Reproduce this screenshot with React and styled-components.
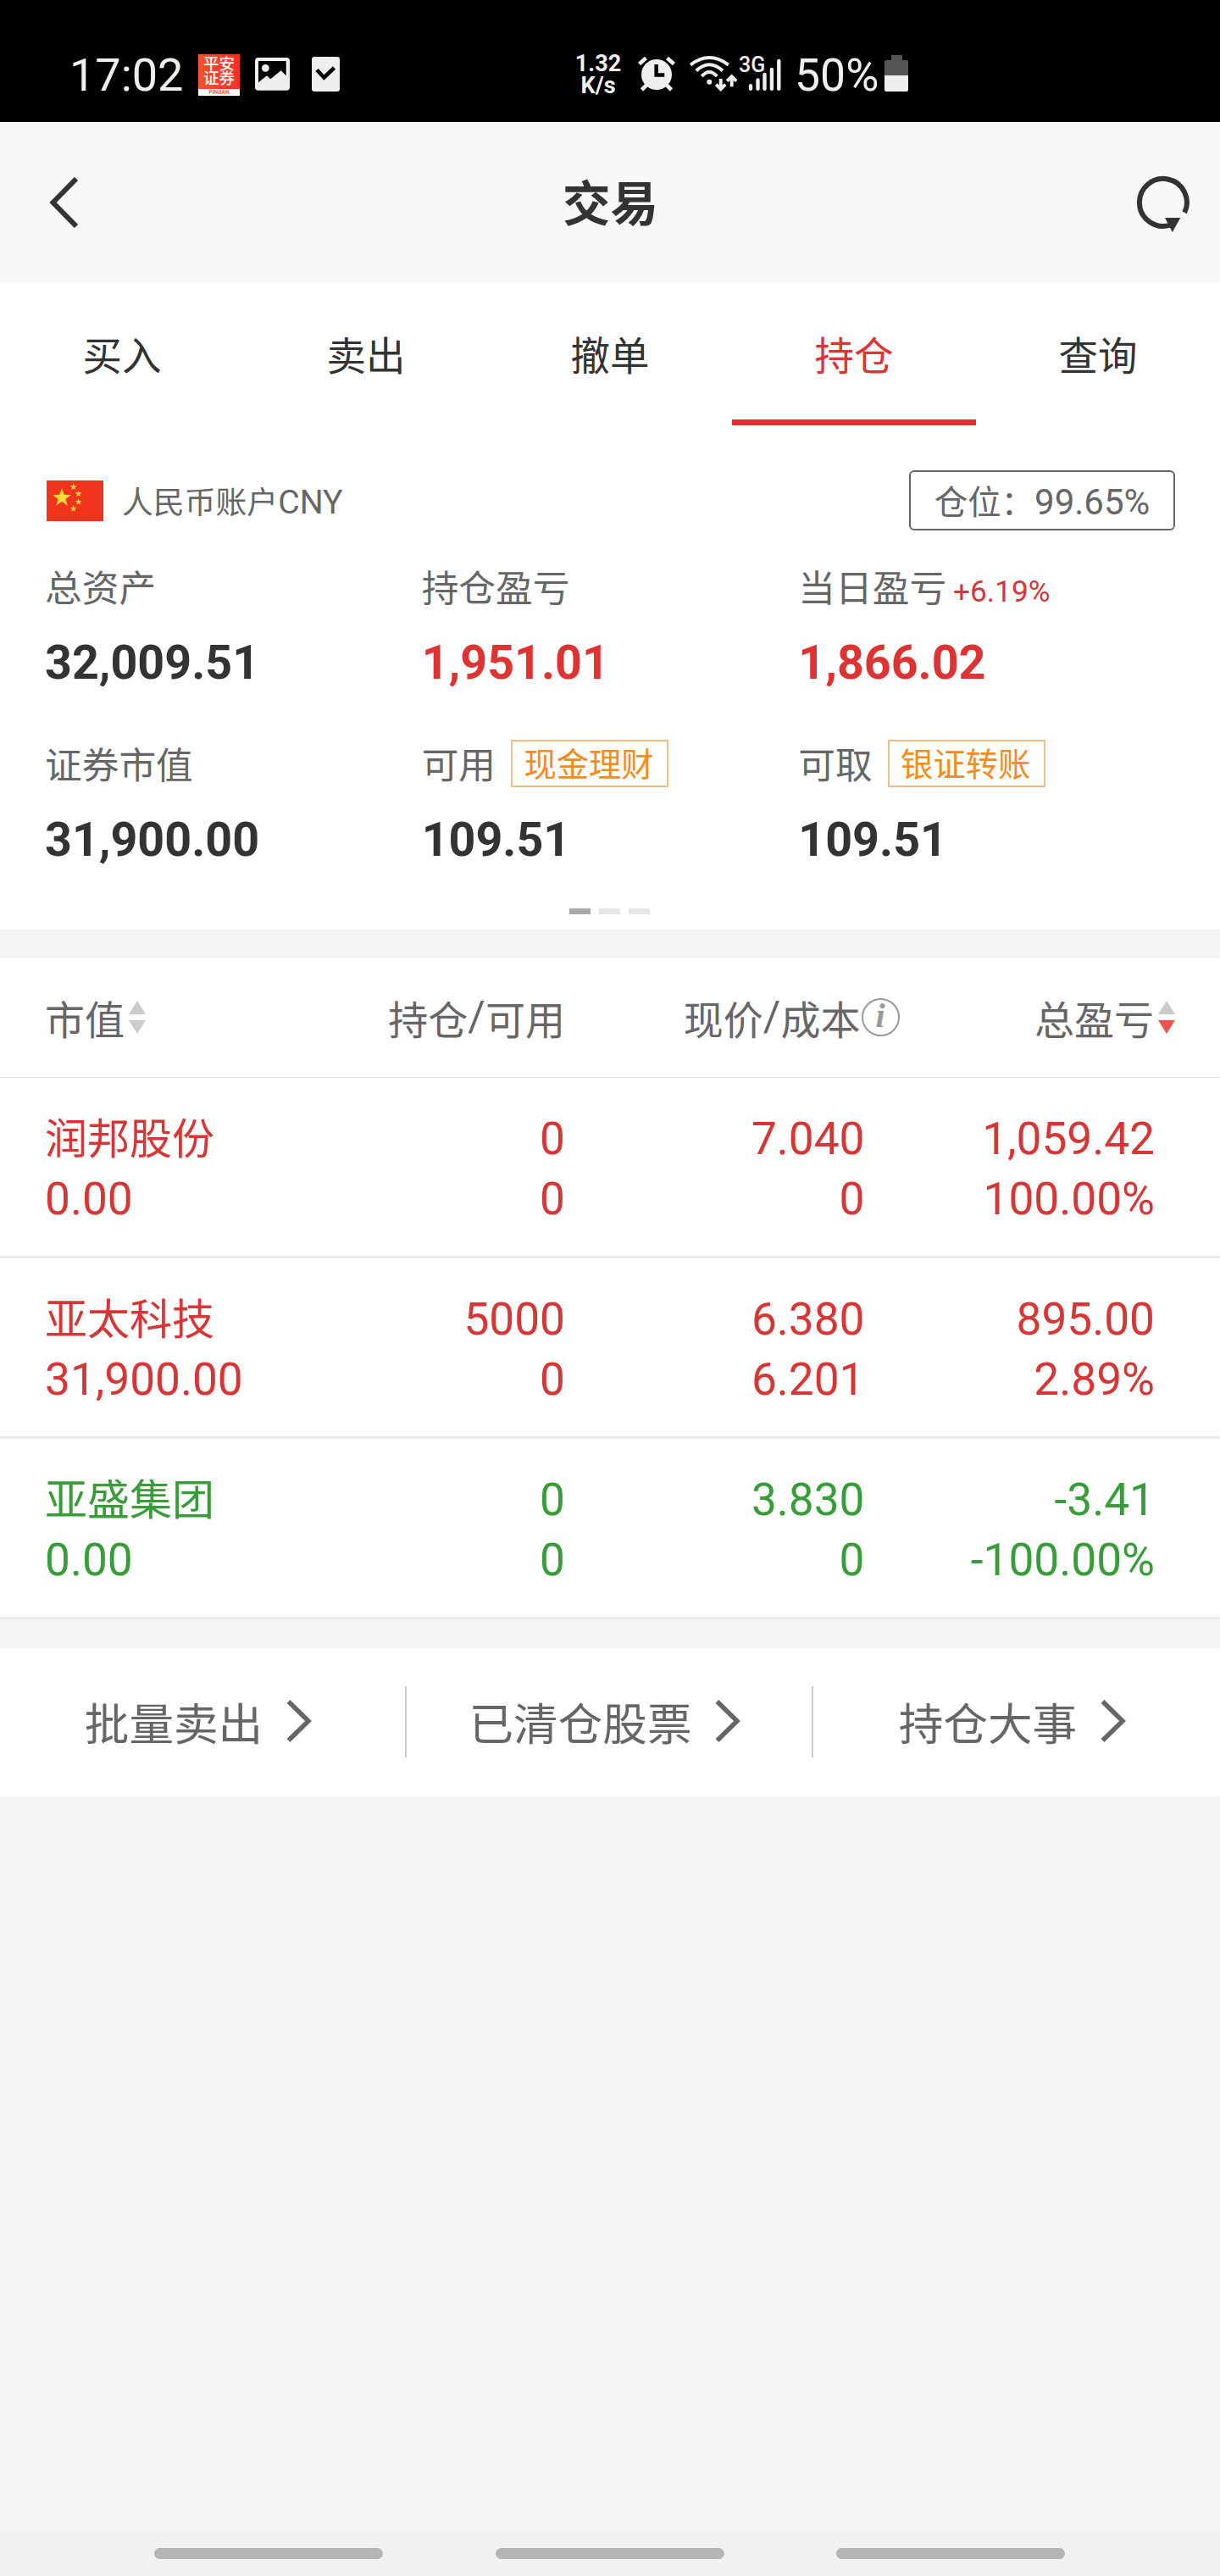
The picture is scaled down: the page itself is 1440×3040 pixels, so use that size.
import React from 'react';
import styled, { createGlobalStyle } from 'styled-components';

const RED = '#dd3333';
const ROW_RED = '#d63636';
const ROW_GREEN = '#389c38';

const tabs = ['买入', '卖出', '撤单', '持仓', '查询'];

const assets = [
  { label: '总资产', value: '32,009.51' },
  { label: '持仓盈亏', value: '1,951.01', red: true },
  { label: '当日盈亏', value: '1,866.02', red: true, rate: '+6.19%' },
  { label: '证券市值', value: '31,900.00' },
  { label: '可用', value: '109.51', link: '现金理财' },
  { label: '可取', value: '109.51', link: '银证转账' },
];

const stocks = [
  {
    name: '润邦股份',
    color: ROW_RED,
    top: ['0', '7.040', '1,059.42'],
    bottom: ['0.00', '0', '0', '100.00%'],
  },
  {
    name: '亚太科技',
    color: ROW_RED,
    top: ['5000', '6.380', '895.00'],
    bottom: ['31,900.00', '0', '6.201', '2.89%'],
  },
  {
    name: '亚盛集团',
    color: ROW_GREEN,
    top: ['0', '3.830', '-3.41'],
    bottom: ['0.00', '0', '0', '-100.00%'],
  },
];

const actions = ['批量卖出', '已清仓股票', '持仓大事'];

const starPoints = (cx, cy, r) =>
  Array.from({ length: 10 }, (_, i) => {
    const radius = i % 2 ? r * 0.4 : r;
    const angle = (Math.PI / 5) * i - Math.PI / 2;
    return `${cx + radius * Math.cos(angle)},${cy + radius * Math.sin(angle)}`;
  }).join(' ');

const StatusBar = () => (
  <StatusBlock>
    <Clock>17:02</Clock>
    <AppBadge>
      <AppName>
        平安
        <br />
        证券
      </AppName>
      <AppBrand>PINGAN</AppBrand>
    </AppBadge>
    <PhotoIcon width="41" height="45" viewBox="0 0 41 45">
      <rect y="2" width="41" height="38.7" rx="4" fill="#efefef" />
      <path d="M4 6h32.7v17.3l-6-6-12.4 10-4.3-4L4 31.3z" fill="#000" />
      <circle cx="12.3" cy="14.3" r="4.4" fill="#efefef" />
    </PhotoIcon>
    <TaskIcon width="33" height="45" viewBox="0 0 33 45">
      <rect y="1" width="33" height="41" rx="3" fill="#efefef" />
      <path d="M6 16.5l8.5 9L26.5 14" fill="none" stroke="#000" strokeWidth="4.6" />
    </TaskIcon>
    <Speed>
      1.32
      <br />
      K/s
    </Speed>
    <AlarmIcon width="44" height="45" viewBox="0 0 44 45">
      <circle cx="22" cy="22" r="18" fill="#efefef" />
      <g stroke="#efefef" strokeWidth="4.6">
        <path d="M1.5 9.5l8-7M42.5 9.5l-8-7M4.5 40l6-6M39.5 40l-6-6" />
      </g>
      <path d="M21.7 10v12.5h9.6" fill="none" stroke="#000" strokeWidth="4.6" />
    </AlarmIcon>
    <WifiIcon width="57" height="45" viewBox="0 0 57 45">
      <g fill="none" stroke="#efefef" strokeWidth="3.9">
        <path d="M2 10.6Q24.3-6.5 46.7 10.6" />
        <path d="M8.7 17.5Q24.3 2.9 40 17.5" />
        <path d="M15.3 24Q24.3 14 33.3 24" />
        <path d="M37.7 27v11.5M32.2 33.7l5.5 5.5 5.5-5.5" />
        <path d="M50.7 36.3V25M45.2 29.7l5.5-5.5 5.5 5.5" />
      </g>
      <circle cx="24.3" cy="30.7" r="3" fill="#efefef" />
    </WifiIcon>
    <Signal>
      <Network>3G</Network>
      <svg width="50" height="45" viewBox="0 0 50 45">
        <g stroke="#efefef" strokeWidth="4.4" strokeLinecap="round">
          <path d="M14 35.2v3.5M22.5 28.5v10.2M30.5 22v16.7M38.9 16v22.7M47.3 6v32.7" />
        </g>
      </svg>
    </Signal>
    <Percent>50%</Percent>
    <BatteryIcon width="28" height="45" viewBox="0 0 28 45">
      <path d="M8-1h13v6h5a2 2 0 0 1 2 2v16H0V7a2 2 0 0 1 2-2h6z" fill="#555" />
      <path d="M0 23h28v17a2 2 0 0 1-2 2H2a2 2 0 0 1-2-2z" fill="#efefef" />
    </BatteryIcon>
  </StatusBlock>
);

const SortArrows = ({ desc }) => (
  <SortIcon width="20" height="39" viewBox="0 0 20 39">
    <path d="M10 0l10 16H0z" fill="#cbcbcb" />
    <path d="M0 23h20L10 39z" fill={desc ? '#ef5350' : '#cbcbcb'} />
  </SortIcon>
);

const StockRow = ({ stock }) => (
  <RowBlock color={stock.color}>
    <Name>{stock.name}</Name>
    {stock.top.map((v, i) => (
      <Num key={`top-${i}`}>{v}</Num>
    ))}
    {stock.bottom.map((v, i) => (
      <Num key={`bottom-${i}`} $left={i === 0}>
        {v}
      </Num>
    ))}
  </RowBlock>
);

const App = () => (
  <>
    <GlobalStyle />
    <Page>
      <StatusBar />
      <Header>
        <svg width="35" height="60" viewBox="0 0 35 60">
          <path d="M32 2L4.5 30 32 58" fill="none" stroke="#333" strokeWidth="6" />
        </svg>
        <Title>交易</Title>
        <RefreshIcon width="66" height="68" viewBox="31 27 66 68">
          <path
            d="M88.2 70.9A28 28 0 1 0 71 85.7"
            fill="none"
            stroke="#333"
            strokeWidth="6"
          />
          <path d="M65 77h18.3l-9.5 17z" fill="#333" />
        </RefreshIcon>
      </Header>
      <TabList>
        {tabs.map((tab) => (
          <Tab key={tab} $active={tab === '持仓'}>
            {tab}
          </Tab>
        ))}
      </TabList>

      <Account>
        <AccountTop>
          <svg width="67" height="48" viewBox="0 0 67 48">
            <rect width="67" height="48" fill="#ef331c" />
            <g fill="#ffd93b">
              <polygon points={starPoints(18, 20.5, 11.5)} />
              <polygon points={starPoints(31.7, 7.7, 4.2)} />
              <polygon points={starPoints(37.6, 15.7, 4.2)} />
              <polygon points={starPoints(37.6, 25.3, 4.2)} />
              <polygon points={starPoints(31.7, 33.3, 4.2)} />
            </g>
          </svg>
          <Currency>
            <Cjk>人民币账户</Cjk>CNY
          </Currency>
          <Position>
            <Cjk>仓位：</Cjk>99.65%
          </Position>
        </AccountTop>
        <AssetGrid>
          {assets.map((a) => (
            <div key={a.label}>
              <Label>
                {a.label}
                {a.rate && <Rate>{a.rate}</Rate>}
                {a.link && <LinkTag>{a.link}</LinkTag>}
              </Label>
              <Value $red={a.red}>{a.value}</Value>
            </div>
          ))}
        </AssetGrid>
        <Pager>
          <Dot $active />
          <Dot />
          <Dot />
        </Pager>
      </Account>

      <TableHead>
        <HeadCell $left>
          <Cjk>市值</Cjk>
          <SortArrows />
        </HeadCell>
        <HeadCell>
          <Cjk>持仓</Cjk>/<Cjk>可用</Cjk>
        </HeadCell>
        <HeadCell $overhang={41}>
          <Cjk>现价</Cjk>/<Cjk>成本</Cjk>
          <Info>i</Info>
        </HeadCell>
        <HeadCell $overhang={24}>
          <Cjk>总盈亏</Cjk>
          <SortArrows desc />
        </HeadCell>
      </TableHead>
      {stocks.map((s) => (
        <StockRow key={s.name} stock={s} />
      ))}

      <Actions>
        {actions.map((text) => (
          <Action key={text}>
            <ActionText>{text}</ActionText>
            <Chevron width="40" height="50" viewBox="0 0 40 50">
              <path d="M2.5 2L26 25 2.5 48" fill="none" stroke="#666" strokeWidth="5.5" />
            </Chevron>
          </Action>
        ))}
      </Actions>
      <NavBar>
        <NavPill />
        <NavPill />
        <NavPill />
      </NavBar>
    </Page>
  </>
);

export default App;

const GlobalStyle = createGlobalStyle`
  body {
    margin: 0;
    background-color: #f4f4f4;
    font-family: Roboto, 'Noto Sans CJK SC', sans-serif;
  }
`;

const Page = styled.div`
  display: flex;
  flex-direction: column;
  width: 1440px;
  height: 3040px;
  overflow: hidden;
  background-color: #f4f4f4;
`;

// 汉字比同行的数字略小
const Cjk = styled.span`
  font-size: 0.94em;
`;

const StatusBlock = styled.div`
  box-sizing: border-box;
  display: flex;
  flex: none;
  align-items: center;
  height: 144px;
  padding: 33px 0 0 82px;
  background-color: #000;
  color: #efefef;
`;

const Clock = styled.div`
  width: 152px;
  font-size: 54px;
  line-height: 60px;
`;

const AppBadge = styled.div`
  display: flex;
  flex-direction: column;
  justify-content: space-between;
  width: 49px;
  height: 49px;
  background: linear-gradient(90deg, #f4522f, #fb2f25);
  text-align: center;
`;

const AppName = styled.div`
  padding-top: 4px;
  color: #fff;
  font-size: 18.5px;
  font-weight: 500;
  line-height: 17px;
`;

const AppBrand = styled.div`
  height: 8px;
  background-color: #fff;
  color: #e8663c;
  font-size: 6.5px;
  font-weight: 700;
  line-height: 8px;
`;

const PhotoIcon = styled.svg`
  margin-left: 18px;
`;

const TaskIcon = styled.svg`
  margin-left: 26px;
`;

const Speed = styled.div`
  width: 56px;
  margin-left: 277px;
  font-size: 27px;
  font-weight: 700;
  line-height: 25.7px;
  text-align: center;
`;

const AlarmIcon = styled.svg`
  margin-left: 19px;
`;

const WifiIcon = styled.svg`
  margin-left: 16px;
`;

const Signal = styled.div`
  position: relative;
  width: 50px;
  height: 45px;
  margin-left: 2px;
`;

const Network = styled.span`
  position: absolute;
  top: -4px;
  left: 0;
  font-size: 25px;
  font-weight: 500;
  line-height: 29px;
`;

const Percent = styled.div`
  width: 106px;
  margin-left: 16px;
  font-size: 53.5px;
  line-height: 60px;
`;

const BatteryIcon = styled.svg`
  overflow: visible;
`;

const Header = styled.header`
  box-sizing: border-box;
  display: grid;
  flex: none;
  grid-template-columns: 1fr auto 1fr;
  align-items: center;
  height: 190px;
  padding: 0 33px 0 58px;
  background-color: #f8f8f8;
`;

const Title = styled.h1`
  margin: 0 24px 0 0;
  padding-top: 5px;
  color: #333;
  font-size: 56.5px;
  font-weight: 700;
  line-height: 70px;
`;

const RefreshIcon = styled.svg`
  justify-self: end;
  margin-top: 4px;
`;

const TabList = styled.nav`
  display: grid;
  flex: none;
  grid-template-columns: repeat(5, 1fr);
  background-color: #fff;
`;

const Tab = styled.div`
  padding-top: 14px;
  border-bottom: 7px solid ${(p) => (p.$active ? RED : '#fff')};
  color: ${(p) => (p.$active ? RED : '#333')};
  font-size: 46.5px;
  line-height: 147px;
  text-align: center;
`;

const Account = styled.section`
  box-sizing: border-box;
  flex: none;
  height: 595px;
  margin-bottom: 34px;
  padding: 53px 53px 0;
  background-color: #fff;
`;

const AccountTop = styled.div`
  display: flex;
  align-items: center;
  height: 71px;
  padding-left: 2px;
  color: #666;
`;

const Currency = styled.div`
  margin-left: 22px;
  padding-top: 6px;
  font-size: 39.2px;
  line-height: 50px;
`;

const Position = styled.div`
  box-sizing: border-box;
  width: 314px;
  height: 71px;
  margin-left: auto;
  padding-top: 3px;
  border: 2px solid #666;
  border-radius: 6px;
  font-size: 42px;
  line-height: 66px;
  text-align: center;
`;

const AssetGrid = styled.div`
  display: grid;
  grid-template-columns: repeat(3, 1fr);
  row-gap: 57px;
  margin-top: 40px;
`;

const Label = styled.div`
  display: flex;
  align-items: baseline;
  height: 58px;
  color: #666;
  font-size: 43.7px;
  line-height: 58px;
`;

const Rate = styled.span`
  margin-left: 8px;
  color: ${ROW_RED};
  font-size: 35.2px;
  line-height: 40px;
`;

const LinkTag = styled.span`
  box-sizing: border-box;
  align-self: flex-start;
  width: 186px;
  height: 56px;
  margin: -2px 0 0 18px;
  padding: 2px 2px 0 0;
  border: 2px solid #edbf85;
  color: #f28c1c;
  font-size: 38.3px;
  line-height: 52px;
  text-align: center;
`;

const Value = styled.div`
  margin-top: 23px;
  color: ${(p) => (p.$red ? RED : '#333')};
  font-size: 55.6px;
  font-weight: 700;
  line-height: 71px;
`;

const Pager = styled.div`
  display: flex;
  justify-content: center;
  gap: 10px;
  margin: 45px 1px 0 0;
`;

const Dot = styled.span`
  width: 25px;
  height: 7px;
  background-color: ${(p) => (p.$active ? '#aaa' : '#e6e6e6')};
`;

const TableHead = styled.div`
  box-sizing: border-box;
  display: grid;
  flex: none;
  grid-template-columns: 300px 314px 353.5px 342.5px;
  height: 141px;
  padding: 0 0 2px 53px;
  border-bottom: 1px solid #e8e8e8;
  background-color: #fff;
`;

const HeadCell = styled.div`
  display: flex;
  align-items: center;
  justify-content: ${(p) => (p.$left ? 'flex-start' : 'flex-end')};
  margin-right: ${(p) => -(p.$overhang || 0)}px;
  color: #666;
  font-size: 50px;
`;

const SortIcon = styled.svg`
  margin-left: 5px;
`;

const Info = styled.span`
  box-sizing: border-box;
  width: 45px;
  height: 45px;
  margin-left: 1px;
  border: 2px solid #999;
  border-radius: 50%;
  color: #999;
  font-family: 'Liberation Serif', serif;
  font-size: 40px;
  font-style: italic;
  font-weight: 700;
  line-height: 38px;
  text-align: center;
`;

const RowBlock = styled.div`
  display: grid;
  flex: none;
  grid-template-columns: 300px 314px 353.5px 342.5px;
  grid-auto-rows: 71px;
  height: 173px;
  padding: 37px 0 0 53px;
  border-bottom: 3px solid #ebebeb;
  background-color: #fff;
  color: ${(p) => p.color};
  line-height: 71px;
`;

const Name = styled.div`
  padding-top: 1px;
  font-size: 50px;
`;

const Num = styled.div`
  font-size: 53.2px;
  text-align: ${(p) => (p.$left ? 'left' : 'right')};
`;

const Actions = styled.div`
  display: grid;
  flex: none;
  grid-template-columns: repeat(3, 1fr);
  height: 175px;
  margin-top: 34px;
  background-color: #fff;
`;

const Action = styled.div`
  display: flex;
  align-items: center;
  justify-content: center;
  height: 84px;
  margin-top: 45px;
  border-right: 2px solid #ccc;
  color: #666;

  &:last-child {
    border-right: none;
  }
`;

const ActionText = styled.span`
  padding-top: 8px;
  font-size: 52.6px;
  line-height: 76px;
`;

const Chevron = styled.svg`
  margin: 0 0 2px 28px;
`;

const NavBar = styled.div`
  display: flex;
  flex: none;
  justify-content: center;
  gap: 132.5px;
  height: 33px;
  margin-top: auto;
  padding: 20px 1px 0 0;
  background-color: #f1f1f1;
`;

const NavPill = styled.span`
  width: 270px;
  height: 13px;
  border-radius: 7px;
  background-color: #b5b5b5;
`;
